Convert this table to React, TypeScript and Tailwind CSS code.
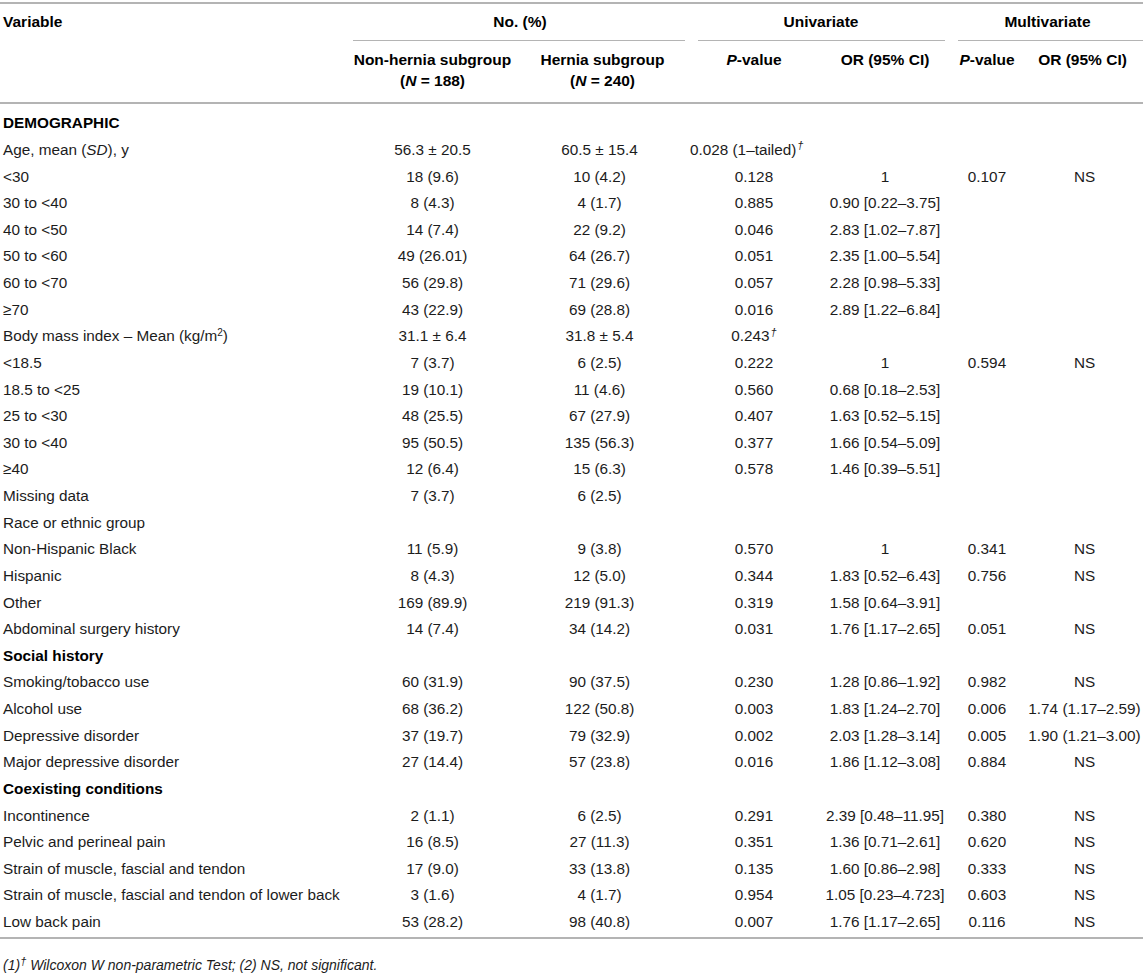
import type { ReactNode } from "react";

type Row =
	| { section: string }
	| { cells: ReactNode[]; leftP?: boolean };

const cols = "grid grid-cols-[350px_165px_175px_128px_134px_70px_121px]";

const Dag = () => <sup className="italic text-[11px] ml-px">†</sup>;

const rows: Row[] = [
	{ section: "DEMOGRAPHIC" },
	{
		cells: [
			<>
				Age, mean (<i>SD</i>), y
			</>,
			"56.3 ± 20.5",
			"60.5 ± 15.4",
			<>
				0.028 (1–tailed)
				<Dag />
			</>,
		],
		leftP: true,
	},
	{ cells: ["<30", "18 (9.6)", "10 (4.2)", "0.128", "1", "0.107", "NS"] },
	{ cells: ["30 to <40", "8 (4.3)", "4 (1.7)", "0.885", "0.90 [0.22–3.75]"] },
	{ cells: ["40 to <50", "14 (7.4)", "22 (9.2)", "0.046", "2.83 [1.02–7.87]"] },
	{ cells: ["50 to <60", "49 (26.01)", "64 (26.7)", "0.051", "2.35 [1.00–5.54]"] },
	{ cells: ["60 to <70", "56 (29.8)", "71 (29.6)", "0.057", "2.28 [0.98–5.33]"] },
	{ cells: ["≥70", "43 (22.9)", "69 (28.8)", "0.016", "2.89 [1.22–6.84]"] },
	{
		cells: [
			<>
				Body mass index – Mean (kg/m<sup className="text-[10px]">2</sup>)
			</>,
			"31.1 ± 6.4",
			"31.8 ± 5.4",
			<>
				0.243
				<Dag />
			</>,
		],
	},
	{ cells: ["<18.5", "7 (3.7)", "6 (2.5)", "0.222", "1", "0.594", "NS"] },
	{ cells: ["18.5 to <25", "19 (10.1)", "11 (4.6)", "0.560", "0.68 [0.18–2.53]"] },
	{ cells: ["25 to <30", "48 (25.5)", "67 (27.9)", "0.407", "1.63 [0.52–5.15]"] },
	{ cells: ["30 to <40", "95 (50.5)", "135 (56.3)", "0.377", "1.66 [0.54–5.09]"] },
	{ cells: ["≥40", "12 (6.4)", "15 (6.3)", "0.578", "1.46 [0.39–5.51]"] },
	{ cells: ["Missing data", "7 (3.7)", "6 (2.5)"] },
	{ cells: ["Race or ethnic group"] },
	{ cells: ["Non-Hispanic Black", "11 (5.9)", "9 (3.8)", "0.570", "1", "0.341", "NS"] },
	{ cells: ["Hispanic", "8 (4.3)", "12 (5.0)", "0.344", "1.83 [0.52–6.43]", "0.756", "NS"] },
	{ cells: ["Other", "169 (89.9)", "219 (91.3)", "0.319", "1.58 [0.64–3.91]"] },
	{ cells: ["Abdominal surgery history", "14 (7.4)", "34 (14.2)", "0.031", "1.76 [1.17–2.65]", "0.051", "NS"] },
	{ section: "Social history" },
	{ cells: ["Smoking/tobacco use", "60 (31.9)", "90 (37.5)", "0.230", "1.28 [0.86–1.92]", "0.982", "NS"] },
	{ cells: ["Alcohol use", "68 (36.2)", "122 (50.8)", "0.003", "1.83 [1.24–2.70]", "0.006", "1.74 (1.17–2.59)"] },
	{ cells: ["Depressive disorder", "37 (19.7)", "79 (32.9)", "0.002", "2.03 [1.28–3.14]", "0.005", "1.90 (1.21–3.00)"] },
	{ cells: ["Major depressive disorder", "27 (14.4)", "57 (23.8)", "0.016", "1.86 [1.12–3.08]", "0.884", "NS"] },
	{ section: "Coexisting conditions" },
	{ cells: ["Incontinence", "2 (1.1)", "6 (2.5)", "0.291", "2.39 [0.48–11.95]", "0.380", "NS"] },
	{ cells: ["Pelvic and perineal pain", "16 (8.5)", "27 (11.3)", "0.351", "1.36 [0.71–2.61]", "0.620", "NS"] },
	{ cells: ["Strain of muscle, fascial and tendon", "17 (9.0)", "33 (13.8)", "0.135", "1.60 [0.86–2.98]", "0.333", "NS"] },
	{ cells: ["Strain of muscle, fascial and tendon of lower back", "3 (1.6)", "4 (1.7)", "0.954", "1.05 [0.23–4.723]", "0.603", "NS"] },
	{ cells: ["Low back pain", "53 (28.2)", "98 (40.8)", "0.007", "1.76 [1.17–2.65]", "0.116", "NS"] },
];

function BodyRow({ row }: { row: Row }) {
	if ("section" in row) {
		return (
			<div className="flex h-[26.63px] items-center pl-[3px] font-bold text-black">
				{row.section}
			</div>
		);
	}
	const c = row.cells;
	return (
		<div className={`${cols} h-[26.63px] items-center`}>
			<div className="pl-[3px] whitespace-nowrap">{c[0]}</div>
			<div className="text-center whitespace-nowrap">{c[1]}</div>
			<div className="pr-[6px] text-center whitespace-nowrap">{c[2]}</div>
			<div
				className={
					row.leftP
						? "text-left whitespace-nowrap"
						: "text-center whitespace-nowrap"
				}
			>
				{c[3]}
			</div>
			<div className="text-center whitespace-nowrap">{c[4]}</div>
			<div className="text-center whitespace-nowrap">{c[5]}</div>
			<div className="pl-[4px] text-center whitespace-nowrap">{c[6]}</div>
		</div>
	);
}

export default function App() {
	return (
		<div className="min-h-screen w-[1143px] bg-white pt-[2px] font-['Liberation_Sans',Arial,sans-serif] text-[15.3px] leading-[20px] text-[#1c1c1c]">
			<div className="h-[2px] bg-[#b4b4b4]" />
			<div className={`${cols} h-[36px] items-center text-[15.5px] font-bold text-black`}>
				<div className="pl-[3px]">Variable</div>
				<div className="col-span-2 text-center">No. (%)</div>
				<div className="col-span-2 text-center">Univariate</div>
				<div className="col-span-2 text-center">Multivariate</div>
			</div>
			<div className={cols}>
				<div />
				<div className="col-span-2 ml-[3px] mr-[5px] h-px bg-[#b4b4b4]" />
				<div className="col-span-2 ml-[8px] mr-[7px] h-px bg-[#b4b4b4]" />
				<div className="col-span-2 ml-[6px] h-px bg-[#b4b4b4]" />
			</div>
			<div className={`${cols} pt-[8px] pb-[11px] text-[15.5px] font-bold leading-[21px] text-black`}>
				<div />
				<div className="text-center">
					Non-hernia subgroup
					<br />(<i>N</i> = 188)
				</div>
				<div className="text-center">
					Hernia subgroup
					<br />(<i>N</i> = 240)
				</div>
				<div className="text-center">
					<i>P</i>-value
				</div>
				<div className="text-center">OR (95% CI)</div>
				<div className="text-center">
					<i>P</i>-value
				</div>
				<div className="text-center">OR (95% CI)</div>
			</div>
			<div className="h-[2px] bg-[#b4b4b4]" />
			<div className="pt-[6px]">
				{rows.map((r, i) => (
					<BodyRow key={i} row={r} />
				))}
			</div>
			<div className="mt-[2px] h-[2px] bg-[#b4b4b4]" />
			<div className="pt-[16px] pl-[3px] text-[14px] italic">
				(1)<sup className="text-[11px]">†</sup> Wilcoxon W non-parametric Test; (2) NS, not
				significant.
			</div>
		</div>
	);
}
